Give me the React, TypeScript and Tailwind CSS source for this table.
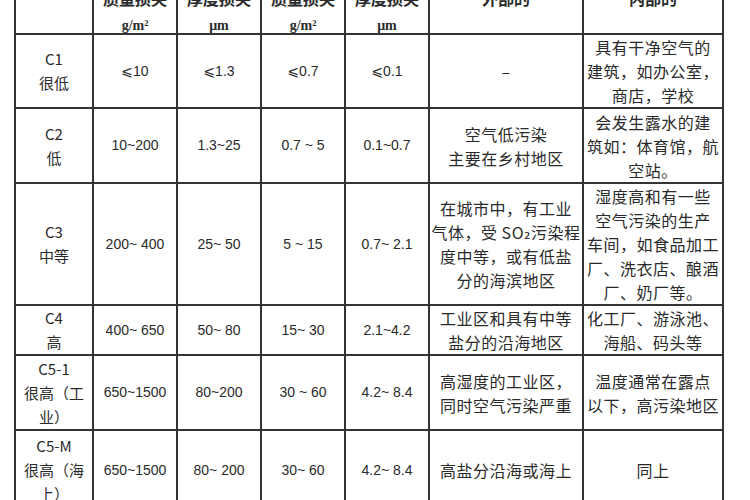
const cjk = { fontFamily: '"Noto Sans CJK SC", "DejaVu Sans", sans-serif' };

type Row = { h: number; cls: string[]; vals: string[]; out: string[]; inn: string[] };

const rows: Row[] = [
  { h: 73, cls: ["C1", "很低"], vals: ["⩽10", "⩽1.3", "⩽0.7", "⩽0.1"], out: ["–"], inn: ["具有干净空气的", "建筑，如办公室，", "商店，学校"] },
  { h: 75, cls: ["C2", "低"], vals: ["10~200", "1.3~25", "0.7 ~ 5", "0.1~0.7"], out: ["空气低污染", "主要在乡村地区"], inn: ["会发生露水的建", "筑如：体育馆，航", "空站。"] },
  { h: 122, cls: ["C3", "中等"], vals: ["200~ 400", "25~ 50", "5 ~ 15", "0.7~ 2.1"], out: ["在城市中，有工业", "气体，受 SO₂污染程", "度中等，或有低盐", "分的海滨地区"], inn: ["湿度高和有一些", "空气污染的生产", "车间，如食品加工", "厂、洗衣店、酿酒", "厂、奶厂等。"] },
  { h: 49, cls: ["C4", "高"], vals: ["400~ 650", "50~ 80", "15~ 30", "2.1~4.2"], out: ["工业区和具有中等", "盐分的沿海地区"], inn: ["化工厂、游泳池、", "海船、码头等"] },
  { h: 75, cls: ["C5-1", "很高（工", "业）"], vals: ["650~1500", "80~200", "30 ~ 60", "4.2~ 8.4"], out: ["高湿度的工业区，", "同时空气污染严重"], inn: ["温度通常在露点", "以下，高污染地区"] },
  { h: 80, cls: ["C5-M", "很高（海", "上）"], vals: ["650~1500", "80~ 200", "30~ 60", "4.2~ 8.4"], out: ["高盐分沿海或海上"], inn: ["同上"] },
];

const heads = [
  ["质量损失", "g/m²"],
  ["厚度损失", "μm"],
  ["质量损失", "g/m²"],
  ["厚度损失", "μm"],
  ["外部的", ""],
  ["内部的", ""],
];

function Lines({ lines }: { lines: string[] }) {
  return (
    <div className="leading-[24px]">
      {lines.map((l, i) => (
        <div key={i} className="whitespace-nowrap">{l}</div>
      ))}
    </div>
  );
}

export default function App() {
  return (
    <div className="w-[750px] h-[500px] overflow-hidden bg-white text-[#2a2a2a]">
      <table className="table-fixed border-collapse ml-[14px] mt-[-22px]" style={cjk}>
        <colgroup>
          <col className="w-[78px]" />
          <col className="w-[84px]" />
          <col className="w-[84px]" />
          <col className="w-[84px]" />
          <col className="w-[84px]" />
          <col className="w-[154px]" />
          <col className="w-[140px]" />
        </colgroup>
        <tbody>
          <tr className="h-[55px]">
            <td className="border-2 border-[#333]" />
            {heads.map((h, i) => (
              <td key={i} className="border-2 border-[#333] text-center align-top pt-[6px] pb-0">
                <div className="text-[16px] leading-[24px] font-bold">{h[0]}</div>
                <div className="text-[14px] leading-[14px] mt-[9px] h-[14px] font-bold" style={{ fontFamily: '"Liberation Serif", serif' }}>{h[1]}</div>
              </td>
            ))}
          </tr>
          {rows.map((r, i) => (
            <tr key={i} style={{ height: r.h }}>
              <td className="border-2 border-[#333] text-center text-[15px]">
                <Lines lines={r.cls} />
              </td>
              {r.vals.map((v, j) => (
                <td key={j} className="border-2 border-[#333] text-center text-[14px] whitespace-pre" style={{ fontFamily: '"Liberation Sans", "DejaVu Sans", sans-serif' }}>
                  {v}
                </td>
              ))}
              <td className="border-2 border-[#333] text-center text-[16px] tracking-[0.5px]">
                <Lines lines={r.out} />
              </td>
              <td className="border-2 border-[#333] text-center text-[16px] tracking-[0.5px]">
                <Lines lines={r.inn} />
              </td>
            </tr>
          ))}
        </tbody>
      </table>
    </div>
  );
}
